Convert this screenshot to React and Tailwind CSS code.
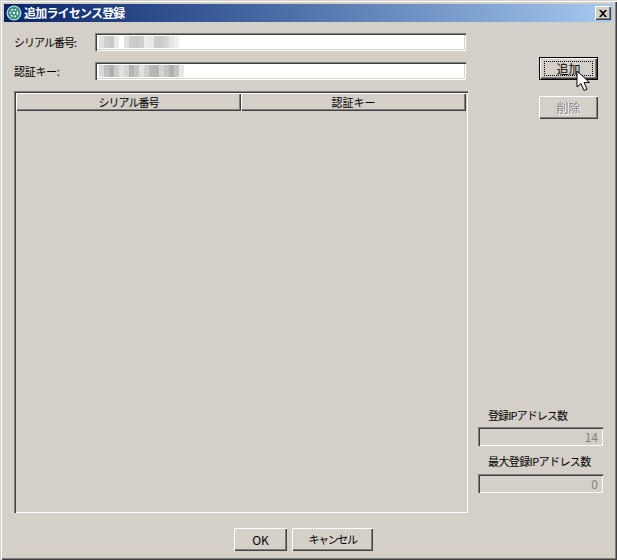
import React from 'react';

const font = { fontFamily: '"Noto Sans CJK JP", "Liberation Sans", sans-serif' };

const raised = 'shadow-[inset_1px_1px_0_#ffffff,inset_-1px_-1px_0_#404040,inset_-2px_-2px_0_#808080]';
const sunken = 'shadow-[inset_1px_1px_0_#808080,inset_2px_2px_0_#404040,inset_-1px_-1px_0_#ffffff,inset_-2px_-2px_0_#d4d0c8]';

// blurred-out licence values
const Smudge = ({ shades }) => (
  <div className="flex h-[12px] items-stretch blur-[0.5px]">
    {shades.map((c, i) => (
      <div key={i} className="w-[5px]" style={{ backgroundColor: c }} />
    ))}
  </div>
);

const serialShades = ['#e0e0e0', '#cfcfcf', '#c8c8c8', '#e8e8e8', '#ffffff', '#e0e0e0', '#cccccc', '#c8c8c8', '#d0d0d0', '#ececec', '#e8e8e8', '#cccccc', '#cccccc', '#d4d4d4', '#e4e4e4', '#eeeeee'];
const keyShades = ['#d8d8d8', '#c0c0c0', '#b0b0b0', '#cccccc', '#e0e0e0', '#d4d4d4', '#b4b4b4', '#c4c4c4', '#e0e0e0', '#d0d0d0', '#b8b8b8', '#b4b4b4', '#d4d4d4', '#c4c4c4', '#b0b0b0', '#c4c4c4', '#e8e8e8'];

const Field = ({ label, shades, labelClass }) => (
  <div className="flex h-[18px] items-center">
    <div className={`w-[81px] whitespace-nowrap text-[11px] text-black ${labelClass}`}>{label}</div>
    <div className={`flex h-[18px] w-[371px] items-center bg-white pl-[4px] ${sunken}`}>
      <Smudge shades={shades} />
    </div>
  </div>
);

const Button = ({ children, className = '', disabled }) => (
  <button
    className={`flex items-center justify-center bg-[#d4d0c8] ${raised} ${disabled ? 'text-[#808080] [text-shadow:1px_1px_0_#ffffff]' : 'text-black'} ${className}`}
  >
    {children}
  </button>
);

const ReadOnly = ({ label, value, labelClass }) => (
  <div className="flex flex-col">
    <div className={`h-[14px] whitespace-nowrap pl-[10px] text-[11px] leading-[12px] text-black ${labelClass}`}>{label}</div>
    <div className={`flex h-[19px] items-center justify-end pr-[5px] text-[12px] leading-[16px] text-[#808080] ${sunken}`}>{value}</div>
  </div>
);

const Header = ({ children, className = '' }) => (
  <div className={`flex h-[18px] items-center justify-center bg-[#d4d0c8] text-[11px] text-black ${raised} ${className}`}>
    {children}
  </div>
);

export default function App() {
  return (
    <div
      style={font}
      className="flex h-[560px] w-[617px] flex-col overflow-hidden bg-[#d4d0c8] p-[4px] shadow-[inset_1px_1px_0_#d4d0c8,inset_2px_2px_0_#ffffff,inset_-1px_-1px_0_#404040,inset_-2px_-2px_0_#808080]"
    >
      {/* Title bar */}
      <div className="flex h-[18px] shrink-0 items-center bg-gradient-to-r from-[#0a246a] to-[#a6caf0] pl-[2px] pr-[2px]">
        <svg width="16" height="16" viewBox="0 0 16 16" className="shrink-0">
          <circle cx="8" cy="8" r="7.5" fill="#b8d8d0" />
          <circle cx="8" cy="8" r="6.2" fill="#2f8a80" />
          <circle cx="8" cy="8" r="3.6" fill="none" stroke="#e8f5f0" strokeWidth="1.6" strokeDasharray="2 1.4" />
          <circle cx="8" cy="8" r="1.2" fill="#ffffff" />
        </svg>
        <div className="ml-[2px] text-[12px] font-bold tracking-[-0.8px] text-white">追加ライセンス登録</div>
        <div className={`ml-auto flex h-[14px] w-[16px] items-center justify-center bg-[#d4d0c8] ${raised}`}>
          <svg width="8" height="7" viewBox="0 0 8 7">
            <path d="M0 0h2l2 2 2-2h2L5 3.500 8 7H6L4 5 2 7H0l3-3.500z" fill="#000000" />
          </svg>
        </div>
      </div>

      {/* Main area */}
      <div className="flex h-[492px] shrink-0 pl-[10px]">
        <div className="flex w-[454px] flex-col pt-[11px]">
          <div className="flex flex-col gap-[11px]">
            <Field label="シリアル番号:" shades={serialShades} labelClass="tracking-[-1px]" />
            <Field label="認証キー:" shades={keyShades} labelClass="tracking-[-0.3px]" />
          </div>
          <div className={`mt-[11px] h-[422px] p-[2px] ${sunken}`}>
            <div className="flex">
              <Header className="w-[225px] tracking-[-1px]">シリアル番号</Header>
              <Header className="w-[225px]">認証キー</Header>
            </div>
          </div>
        </div>

        <div className="ml-[10px] flex w-[125px] flex-col pt-[35px] pb-[21px]">
          <div className="relative ml-[61px] h-[23px] w-[59px] bg-black p-[1px]">
            <Button className="h-[21px] w-[57px] text-[12px]">
              <span className="flex h-[15px] w-[49px] items-center justify-center border border-dotted border-black">追加</span>
            </Button>
            {/* Mouse pointer */}
            <svg width="14" height="22" viewBox="0 0 14 22" className="absolute left-[37px] top-[13px]">
              <path d="M1 1v16l4-3.500 3 7 3-1.300-3-6.700h5.500z" fill="#ffffff" stroke="#000000" strokeWidth="1" />
            </svg>
          </div>
          <Button disabled className="ml-[61px] mt-[16px] h-[23px] w-[59px] text-[12px]">削除</Button>

          <div className="mt-auto flex flex-col gap-[9px]">
            <ReadOnly label="登録IPアドレス数" value="14" labelClass="mb-[4px] tracking-[-0.9px]" />
            <ReadOnly label="最大登録IPアドレス数" value="0" labelClass="mb-[5px] tracking-[-0.6px]" />
          </div>
        </div>
      </div>

      {/* Footer buttons */}
      <div className="flex gap-[5px] pl-[230px] pt-[14px]">
        <Button className="h-[23px] w-[53px] text-[12px]">OK</Button>
        <Button className="h-[23px] w-[81px] text-[11px] tracking-[-1.400px]">キャンセル</Button>
      </div>
    </div>
  );
}
